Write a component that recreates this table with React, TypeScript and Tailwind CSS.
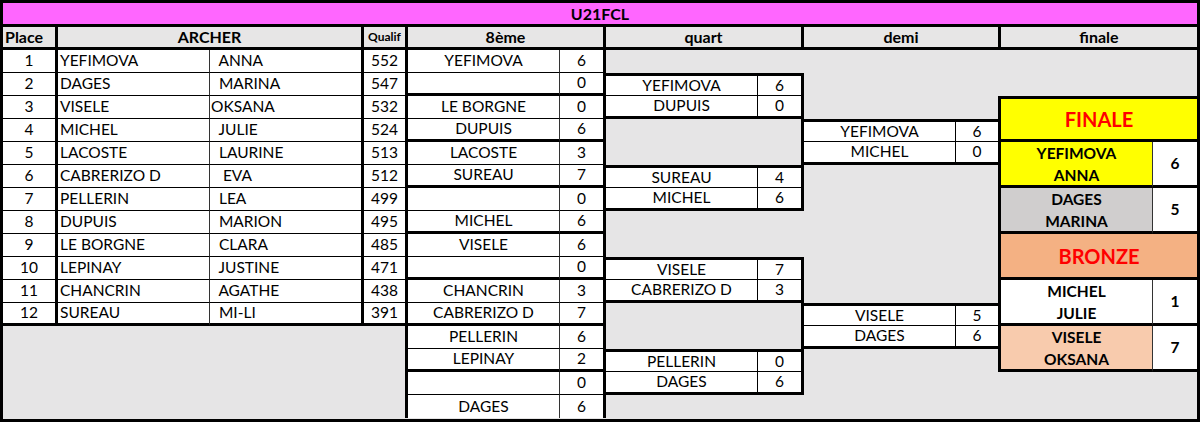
import React from 'react';

type Archer = [number, string, string, number];

const ARCHERS: Archer[] = [
  [1, 'YEFIMOVA', '  ANNA', 552],
  [2, 'DAGES', '  MARINA', 547],
  [3, 'VISELE', 'OKSANA', 532],
  [4, 'MICHEL', '  JULIE', 524],
  [5, 'LACOSTE', '  LAURINE', 513],
  [6, 'CABRERIZO D', '   EVA', 512],
  [7, 'PELLERIN', '  LEA', 499],
  [8, 'DUPUIS', '  MARION', 495],
  [9, 'LE BORGNE', '  CLARA', 485],
  [10, 'LEPINAY', '  JUSTINE', 471],
  [11, 'CHANCRIN', '  AGATHE', 438],
  [12, 'SUREAU', '  MI-LI', 391],
];

const EIGHTH: [string, number][] = [
  ['YEFIMOVA', 6], ['', 0], ['LE BORGNE', 0], ['DUPUIS', 6],
  ['LACOSTE', 3], ['SUREAU', 7], ['', 0], ['MICHEL', 6],
  ['VISELE', 6], ['', 0], ['CHANCRIN', 3], ['CABRERIZO D', 7],
  ['PELLERIN', 6], ['LEPINAY', 2], ['', 0], ['DAGES', 6],
];

// grid row for data row d (1..16)
const ROW = [
  '', 'row-start-3', 'row-start-4', 'row-start-5', 'row-start-6', 'row-start-7', 'row-start-8',
  'row-start-9', 'row-start-10', 'row-start-11', 'row-start-12', 'row-start-13', 'row-start-14',
  'row-start-15', 'row-start-16', 'row-start-17', 'row-start-18',
];

const THIN = 'border-[#333]';

const Cell: React.FC<{ className?: string; children?: React.ReactNode }> = ({ className = '', children }) => (
  <div className={`flex items-center min-w-0 overflow-hidden whitespace-pre border-black ${className}`}>
    {children}
  </div>
);

// a quart / demi box line : name + score
const Match: React.FC<{ col: 'q' | 'd'; d: number; name: string; score: number; edge: 'top' | 'bottom' }> = ({
  col, d, name, score, edge,
}) => {
  const nameCol = col === 'q' ? 'col-start-7' : 'col-start-9';
  const scoreCol = col === 'q' ? 'col-start-8' : 'col-start-10';
  const edgeCls = edge === 'top' ? 'border-t-[3px] border-b' : 'border-b-[3px]';
  return (
    <>
      <Cell className={`${nameCol} ${ROW[d]} ${edgeCls} border-r ${THIN} bg-white justify-center`}>{name}</Cell>
      <Cell className={`${scoreCol} ${ROW[d]} ${edgeCls} border-r-[3px] bg-white justify-center`}>{score}</Cell>
    </>
  );
};

const Podium: React.FC<{ rows: string; bg: string; first: string; last: string; score: number }> = ({
  rows, bg, first, last, score,
}) => (
  <>
    <div className={`col-start-11 ${rows} row-span-2 flex flex-col items-center justify-center border-b-[3px] border-r border-b-black border-r-[#333] font-bold leading-[22px] ${bg}`}>
      <span>{first}</span>
      <span>{last}</span>
    </div>
    <Cell className={`col-start-12 ${rows} row-span-2 border-b-[3px] bg-white justify-center font-bold`}>{score}</Cell>
  </>
);

export default function App() {
  return (
    <div className="w-[1200px] h-[422px] bg-white font-['Lato',sans-serif] text-[15.5px] text-black">
      <div className="grid h-full grid-cols-[55px_152px_154px_44px_152px_46px_152px_46px_152px_45px_152px_44px] grid-rows-[24px_23px_repeat(16,23px)] border-[3px] border-black bg-[#e6e5e6]">
        {/* title */}
        <Cell className="col-start-1 col-span-12 row-start-1 bg-[#ff66ff] border-b-[3px] justify-center font-bold text-[16px]">
          U21FCL
        </Cell>

        {/* headers */}
        <Cell className="col-start-1 row-start-2 bg-[#e7e6e6] border-b-[3px] border-r-[3px] pl-[2px] font-bold text-[16px]">Place</Cell>
        <Cell className="col-start-2 col-span-2 row-start-2 bg-[#e7e6e6] border-b-[3px] border-r-[3px] justify-center font-bold text-[16px]">ARCHER</Cell>
        <Cell className="col-start-4 row-start-2 bg-[#e7e6e6] border-b-[3px] border-r-[3px] justify-center font-bold text-[12px]">Qualif</Cell>
        <Cell className="col-start-5 col-span-2 row-start-2 bg-[#e7e6e6] border-b-[3px] border-r-[3px] justify-center font-bold text-[16px]">8ème</Cell>
        <Cell className="col-start-7 col-span-2 row-start-2 bg-[#e7e6e6] border-b-[3px] border-r-[3px] justify-center font-bold text-[16px]">quart</Cell>
        <Cell className="col-start-9 col-span-2 row-start-2 bg-[#e7e6e6] border-b-[3px] border-r-[3px] justify-center font-bold text-[16px]">demi</Cell>
        <Cell className="col-start-11 col-span-2 row-start-2 bg-[#e7e6e6] border-b-[3px] justify-center font-bold text-[16px]">finale</Cell>

        {/* archer list */}
        {ARCHERS.map(([place, nom, prenom, qualif], i) => {
          const last = i === ARCHERS.length - 1;
          const b = last ? 'border-b-[3px] border-b-black' : `border-b ${THIN}`;
          return (
            <React.Fragment key={place}>
              <Cell className={`col-start-1 ${ROW[i + 1]} bg-white ${b} border-r-[3px] border-r-black justify-center`}>{place}</Cell>
              <Cell className={`col-start-2 ${ROW[i + 1]} bg-white ${b} border-r border-r-[#333] pl-[2px]`}>{nom}</Cell>
              <Cell className={`col-start-3 ${ROW[i + 1]} bg-white ${b} border-r-[3px] border-r-black pl-[1px]`}>{prenom}</Cell>
              <Cell className={`col-start-4 ${ROW[i + 1]} bg-white ${b} border-r-[3px] border-r-black justify-center`}>{qualif}</Cell>
            </React.Fragment>
          );
        })}
        <div className="col-start-1 col-span-4 row-start-15 row-span-4 border-r-[3px] border-black" />

        {/* 8eme */}
        {EIGHTH.map(([name, score], i) => {
          const b = i % 2 === 0 ? `border-b ${THIN}` : i === EIGHTH.length - 1 ? '' : 'border-b-[3px] border-b-black';
          return (
            <React.Fragment key={i}>
              <Cell className={`col-start-5 ${ROW[i + 1]} bg-white ${b} border-r border-r-[#333] justify-center`}>{name}</Cell>
              <Cell className={`col-start-6 ${ROW[i + 1]} bg-white ${b} border-r-[3px] border-r-black justify-center`}>{score}</Cell>
            </React.Fragment>
          );
        })}

        {/* quart */}
        <Match col="q" d={2} name="YEFIMOVA" score={6} edge="top" />
        <Match col="q" d={3} name="DUPUIS" score={0} edge="bottom" />
        <div className="col-start-7 col-span-2 row-start-6 row-span-2 border-r-[3px] border-black" />
        <Match col="q" d={6} name="SUREAU" score={4} edge="top" />
        <Match col="q" d={7} name="MICHEL" score={6} edge="bottom" />
        <Match col="q" d={10} name="VISELE" score={7} edge="top" />
        <Match col="q" d={11} name="CABRERIZO D" score={3} edge="bottom" />
        <div className="col-start-7 col-span-2 row-start-14 row-span-2 border-r-[3px] border-black" />
        <Match col="q" d={14} name="PELLERIN" score={0} edge="top" />
        <Match col="q" d={15} name="DAGES" score={6} edge="bottom" />

        {/* demi */}
        <div className="col-start-9 col-span-2 row-start-5 border-r-[3px] border-black" />
        <Match col="d" d={4} name="YEFIMOVA" score={6} edge="top" />
        <Match col="d" d={5} name="MICHEL" score={0} edge="bottom" />
        <div className="col-start-9 col-span-2 row-start-8 row-span-6 border-r-[3px] border-black" />
        <Match col="d" d={12} name="VISELE" score={5} edge="top" />
        <Match col="d" d={13} name="DAGES" score={6} edge="bottom" />
        <div className="col-start-9 col-span-2 row-start-16 border-r-[3px] border-black" />

        {/* finale */}
        <Cell className="col-start-11 col-span-2 row-start-5 row-span-2 bg-[#ffff00] border-t-[3px] border-b-[3px] justify-center font-bold text-[20px] text-[#ff0000]">
          FINALE
        </Cell>
        <Podium rows="row-start-7" bg="bg-[#ffff00]" first="YEFIMOVA" last="ANNA" score={6} />
        <Podium rows="row-start-9" bg="bg-[#d0cece]" first="DAGES" last="MARINA" score={5} />
        <Cell className="col-start-11 col-span-2 row-start-11 row-span-2 bg-[#f4b183] border-b-[3px] justify-center font-bold text-[20px] text-[#ff0000]">
          BRONZE
        </Cell>
        <Podium rows="row-start-13" bg="bg-white" first="MICHEL" last="JULIE" score={1} />
        <Podium rows="row-start-15" bg="bg-[#f8cbad]" first="VISELE" last="OKSANA" score={7} />
      </div>
    </div>
  );
}
